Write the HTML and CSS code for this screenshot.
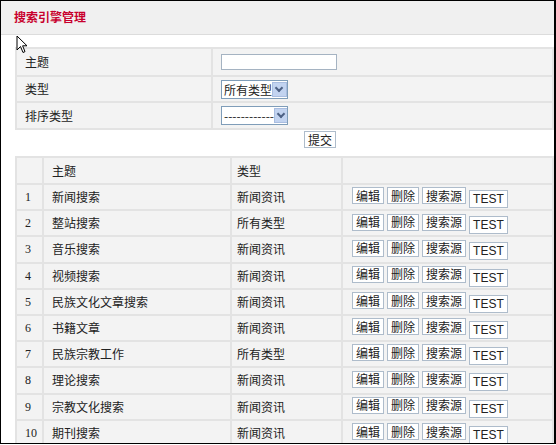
FILE: index.html
```html
<!doctype html>
<html lang="zh">
<head>
    <meta charset="UTF-8">
    <title>搜索引擎管理</title>
    <link rel="stylesheet" href="styles.css">
</head>
<body>
<div id="frame">
    <div class="header">
        <span class="title">搜索引擎管理</span>
    </div>

    <table class="form-table">
        <tr class="r1">
            <td class="label">主题</td>
            <td><input class="text-input" type="text"></td>
        </tr>
        <tr class="r2">
            <td class="label">类型</td>
            <td><span class="select"><span>所有类型</span><i class="arrow"></i></span></td>
        </tr>
        <tr class="r3">
            <td class="label">排序类型</td>
            <td><span class="select"><span>------------</span><i class="arrow"></i></span></td>
        </tr>
    </table>

    <div class="submit-row">
        <button class="btn">提交</button>
    </div>

    <table class="list-table">
        <tr class="head">
            <td class="num"></td>
            <td class="name">主题</td>
            <td class="kind">类型</td>
            <td></td>
        </tr>
    </table>

    <svg class="cursor" width="12" height="19" viewBox="0 0 12 19">
        <path d="M1 1 L1 15 L4.5 11.5 L7 17.5 L9 16.6 L6.6 10.8 L11 10.8 Z" fill="#fff" stroke="#000" stroke-width="1"/>
    </svg>
</div>
<script>
    let rows = [
        ['新闻搜索', '新闻资讯'],
        ['整站搜索', '所有类型'],
        ['音乐搜索', '新闻资讯'],
        ['视频搜索', '新闻资讯'],
        ['民族文化文章搜索', '新闻资讯'],
        ['书籍文章', '新闻资讯'],
        ['民族宗教工作', '所有类型'],
        ['理论搜索', '新闻资讯'],
        ['宗教文化搜索', '新闻资讯'],
        ['期刊搜索', '新闻资讯']
    ];
    let table = document.querySelector('.list-table');
    let markup = '';
    rows.forEach(function (row, i) {
        markup += `<tr>
            <td class="num">${i + 1}</td>
            <td class="name">${row[0]}</td>
            <td class="kind">${row[1]}</td>
            <td class="actions"><button class="btn">编辑</button><button class="btn">删除</button><button class="btn wide">搜索源</button><button class="btn test">TEST</button></td>
        </tr>`;
    });
    table.insertAdjacentHTML('beforeend', markup);
</script>
</body>
</html>
```

FILE: styles.css
```css
body {
    margin: 0;
    background: #fff;
    font-family: "Noto Sans CJK SC", "DejaVu Sans", sans-serif;
    font-size: 12px;
    line-height: 16px;
    color: #222;
}

#frame {
    position: relative;
    width: 553px;
    height: 442px;
    border: 1px solid #000;
    border-right-width: 2px;
    overflow: hidden;
}

.header {
    height: 33px;
    background: #f0f0f0;
    border-bottom: 1px solid #dcdcdc;
    padding-left: 13px;
    line-height: 31px;
}

.title {
    color: #c8002d;
    font-weight: bold;
    font-size: 12px;
}

table {
    border-collapse: collapse;
    margin-left: 14px;
    width: 539px;
}

td {
    border: 2px solid #e3e3e3;
    background: #f3f3f3;
    padding: 0;
    white-space: nowrap;
}

.form-table {
    margin-top: 12px;
}

.form-table .r1 td {
    height: 26px;
}

.form-table .r2 td {
    height: 24px;
}

.form-table .r3 td {
    height: 25px;
}

.form-table .label {
    width: 186px;
    padding-left: 8px;
}

.form-table td + td {
    padding-left: 8px;
}

.text-input {
    display: block;
    box-sizing: border-box;
    width: 116px;
    height: 16px;
    margin: 0;
    padding: 1px;
    border: 1px solid #a5b3c2;
    background: #fff;
}

.select {
    display: flex;
    align-items: center;
    justify-content: space-between;
    box-sizing: border-box;
    width: 67px;
    height: 19px;
    border: 1px solid #7f9db9;
    background: #fff;
    padding: 0 1px 0 2px;
    overflow: hidden;
    font-size: 12px;
    line-height: 15px;
}

.arrow {
    display: block;
    flex: none;
    width: 15px;
    height: 15px;
    background: #c2d3f0;
    border: 1px solid #a9bde0;
    box-sizing: border-box;
    position: relative;
}

.arrow::after {
    content: "";
    position: absolute;
    left: 3px;
    top: 2px;
    width: 4px;
    height: 4px;
    border-right: 2px solid #4d6185;
    border-bottom: 2px solid #4d6185;
    transform: rotate(45deg);
}

.submit-row {
    height: 26px;
    padding-left: 303px;
}

.btn {
    font-family: "Noto Sans CJK SC", sans-serif;
    font-size: 12px;
    line-height: 14px;
    height: 17px;
    padding: 0 3px;
    margin: 0 3px 0 0;
    border: 1px solid #aebccb;
    background: #fff;
    color: #222;
    vertical-align: middle;
}

.list-table td {
    height: 24.2px;
}

.list-table .head td {
    height: 25px;
}

.list-table .num {
    width: 27px;
    padding-left: 8px;
    box-sizing: border-box;
    font-family: "Liberation Serif", serif;
    font-size: 12px;
}

.list-table .name {
    width: 178px;
    padding-left: 8px;
}

.list-table .kind {
    width: 104px;
    padding-left: 5px;
}

.actions {
    padding-left: 9px !important;
}

.btn.wide {
    padding: 0 3px;
}

.btn.test {
    font-family: "Liberation Sans", sans-serif;
    padding: 0 3px;
    height: 18px;
    vertical-align: -4px;
}

.cursor {
    position: absolute;
    left: 15px;
    top: 34px;
}
```
